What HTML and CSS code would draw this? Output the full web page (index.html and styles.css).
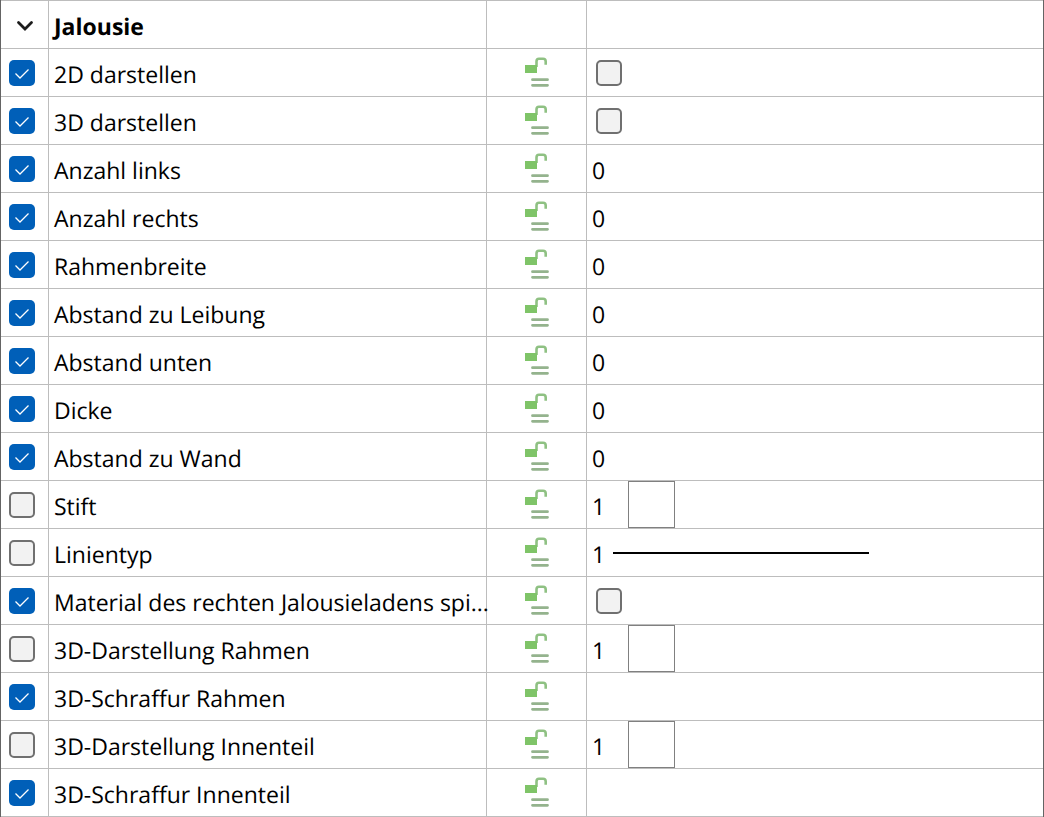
FILE: index.html
```
<!DOCTYPE html>
<html lang="de">
<head>
<meta charset="utf-8">
<title>Jalousie</title>
<link rel="stylesheet" href="styles.css">
</head>
<body>
<svg class="sprite" aria-hidden="true">
  <symbol id="lock" viewBox="0 0 26 31">
    <path d="M12.500 10V4.500Q12.500 1.800 15 1.800H19Q21.700 1.800 21.700 4.500V7.800" fill="none" stroke="#8fc183" stroke-width="2.600"/>
    <rect x="1" y="8" width="12" height="8" fill="#7fc468"/>
    <path d="M8.500 22.700H23.500M8.500 28.300H23.500" stroke="#94b38d" stroke-width="2.800" stroke-linecap="round"/>
  </symbol>
</svg>
<table class="grid">
  <colgroup><col class="col-use"><col class="col-name"><col class="col-lock"><col></colgroup>
  <thead>
    <tr>
      <th class="toggle-cell"><button class="toggle" aria-label="Jalousie einklappen" aria-expanded="true"><svg width="18" height="12" viewBox="0 0 18 12"><path d="M2.500 2.500L9 9L15.500 2.500" fill="none" stroke="#1c1c1c" stroke-width="2.800" stroke-linecap="round"/></svg></button></th>
      <th class="name">Jalousie</th><th></th><th></th>
    </tr>
  </thead>
  <tbody>
    <tr><td class="use"><input class="check" type="checkbox" id="p1" checked></td><td class="name"><label for="p1">2D darstellen</label></td><td class="lock"><button aria-label="Entsperrt"><svg><use href="#lock"/></svg></button></td><td class="flag"><input class="check" type="checkbox" aria-label="2D darstellen Wert"></td></tr>
    <tr><td class="use"><input class="check" type="checkbox" id="p2" checked></td><td class="name"><label for="p2">3D darstellen</label></td><td class="lock"><button aria-label="Entsperrt"><svg><use href="#lock"/></svg></button></td><td class="flag"><input class="check" type="checkbox" aria-label="3D darstellen Wert"></td></tr>
    <tr><td class="use"><input class="check" type="checkbox" id="p3" checked></td><td class="name"><label for="p3">Anzahl links</label></td><td class="lock"><button aria-label="Entsperrt"><svg><use href="#lock"/></svg></button></td><td class="value">0</td></tr>
    <tr><td class="use"><input class="check" type="checkbox" id="p4" checked></td><td class="name"><label for="p4">Anzahl rechts</label></td><td class="lock"><button aria-label="Entsperrt"><svg><use href="#lock"/></svg></button></td><td class="value">0</td></tr>
    <tr><td class="use"><input class="check" type="checkbox" id="p5" checked></td><td class="name"><label for="p5">Rahmenbreite</label></td><td class="lock"><button aria-label="Entsperrt"><svg><use href="#lock"/></svg></button></td><td class="value">0</td></tr>
    <tr><td class="use"><input class="check" type="checkbox" id="p6" checked></td><td class="name"><label for="p6">Abstand zu Leibung</label></td><td class="lock"><button aria-label="Entsperrt"><svg><use href="#lock"/></svg></button></td><td class="value">0</td></tr>
    <tr><td class="use"><input class="check" type="checkbox" id="p7" checked></td><td class="name"><label for="p7">Abstand unten</label></td><td class="lock"><button aria-label="Entsperrt"><svg><use href="#lock"/></svg></button></td><td class="value">0</td></tr>
    <tr><td class="use"><input class="check" type="checkbox" id="p8" checked></td><td class="name"><label for="p8">Dicke</label></td><td class="lock"><button aria-label="Entsperrt"><svg><use href="#lock"/></svg></button></td><td class="value">0</td></tr>
    <tr><td class="use"><input class="check" type="checkbox" id="p9" checked></td><td class="name"><label for="p9">Abstand zu Wand</label></td><td class="lock"><button aria-label="Entsperrt"><svg><use href="#lock"/></svg></button></td><td class="value">0</td></tr>
    <tr><td class="use"><input class="check" type="checkbox" id="p10"></td><td class="name"><label for="p10">Stift</label></td><td class="lock"><button aria-label="Entsperrt"><svg><use href="#lock"/></svg></button></td><td class="sample"><div class="sample-row"><span class="index wide">1</span><span class="swatch"></span></div></td></tr>
    <tr><td class="use"><input class="check" type="checkbox" id="p11"></td><td class="name"><label for="p11">Linientyp</label></td><td class="lock"><button aria-label="Entsperrt"><svg><use href="#lock"/></svg></button></td><td class="sample"><div class="sample-row"><span class="index">1</span><span class="line"></span></div></td></tr>
    <tr><td class="use"><input class="check" type="checkbox" id="p12" checked></td><td class="name"><label for="p12">Material des rechten Jalousieladens spi...</label></td><td class="lock"><button aria-label="Entsperrt"><svg><use href="#lock"/></svg></button></td><td class="flag"><input class="check" type="checkbox" aria-label="Material Wert"></td></tr>
    <tr><td class="use"><input class="check" type="checkbox" id="p13"></td><td class="name"><label for="p13">3D-Darstellung Rahmen</label></td><td class="lock"><button aria-label="Entsperrt"><svg><use href="#lock"/></svg></button></td><td class="sample"><div class="sample-row"><span class="index wide">1</span><span class="swatch"></span></div></td></tr>
    <tr><td class="use"><input class="check" type="checkbox" id="p14" checked></td><td class="name"><label for="p14">3D-Schraffur Rahmen</label></td><td class="lock"><button aria-label="Entsperrt"><svg><use href="#lock"/></svg></button></td><td></td></tr>
    <tr><td class="use"><input class="check" type="checkbox" id="p15"></td><td class="name"><label for="p15">3D-Darstellung Innenteil</label></td><td class="lock"><button aria-label="Entsperrt"><svg><use href="#lock"/></svg></button></td><td class="sample"><div class="sample-row"><span class="index wide">1</span><span class="swatch"></span></div></td></tr>
    <tr><td class="use"><input class="check" type="checkbox" id="p16" checked></td><td class="name"><label for="p16">3D-Schraffur Innenteil</label></td><td class="lock"><button aria-label="Entsperrt"><svg><use href="#lock"/></svg></button></td><td></td></tr>
  </tbody>
</table>
</body>
</html>
```
FILE: styles.css
```
* { box-sizing: border-box; }
body {
  margin: 0;
  background: #fff;
  color: #000;
  font: 23px/32px "Open Sans", "Noto Sans", sans-serif;
  text-rendering: geometricPrecision;
}
.sprite { display: none; }
.grid {
  width: 100%;
  table-layout: fixed;
  border-collapse: separate;
  border-spacing: 0;
  border: solid #646464;
  border-width: 0 1px;
}
.col-use { width: 48px; }
.col-name { width: 438px; }
.col-lock { width: 100px; }
th, td {
  height: 48px;
  padding: 0;
  border: solid #bdbdbd;
  border-width: 0 1px 1px 0;
  text-align: left;
  vertical-align: middle;
  white-space: nowrap;
}
th { height: 49px; border-top-width: 1px; }
th:last-child, td:last-child { border-right-width: 0; }
.toggle-cell { padding-top: 3px; }
.use { padding-left: 8px; }
.flag { padding-left: 9px; }
.name, .value { padding: 2px 0 0 5px; }
button {
  display: block;
  margin: 0 auto;
  padding: 0;
  border: 0;
  background: none;
}
button svg { display: block; }
.lock svg { width: 26px; height: 31px; }
.check {
  appearance: none;
  display: block;
  width: 26px;
  height: 26px;
  margin: 0;
  border: 2px solid #707070;
  border-radius: 5px;
  background: #f2f2f2;
}
.check:checked {
  border: 0;
  background: #005fb8 url("data:image/svg+xml,%3Csvg xmlns='http://www.w3.org/2000/svg' viewBox='0 0 26 26'%3E%3Cpath d='M6.500 13.500L11 18L19.500 9.500' fill='none' stroke='white' stroke-width='1.300'/%3E%3C/svg%3E");
}
.sample-row {
  display: flex;
  align-items: center;
  height: 47px;
  padding-left: 5px;
}
.index { width: 21px; padding-top: 2px; }
.wide { width: 36px; }
.swatch {
  width: 47px;
  height: 47px;
  border: 1px solid #808080;
}
.line {
  width: 256px;
  border-top: 2px solid #000;
}
```
